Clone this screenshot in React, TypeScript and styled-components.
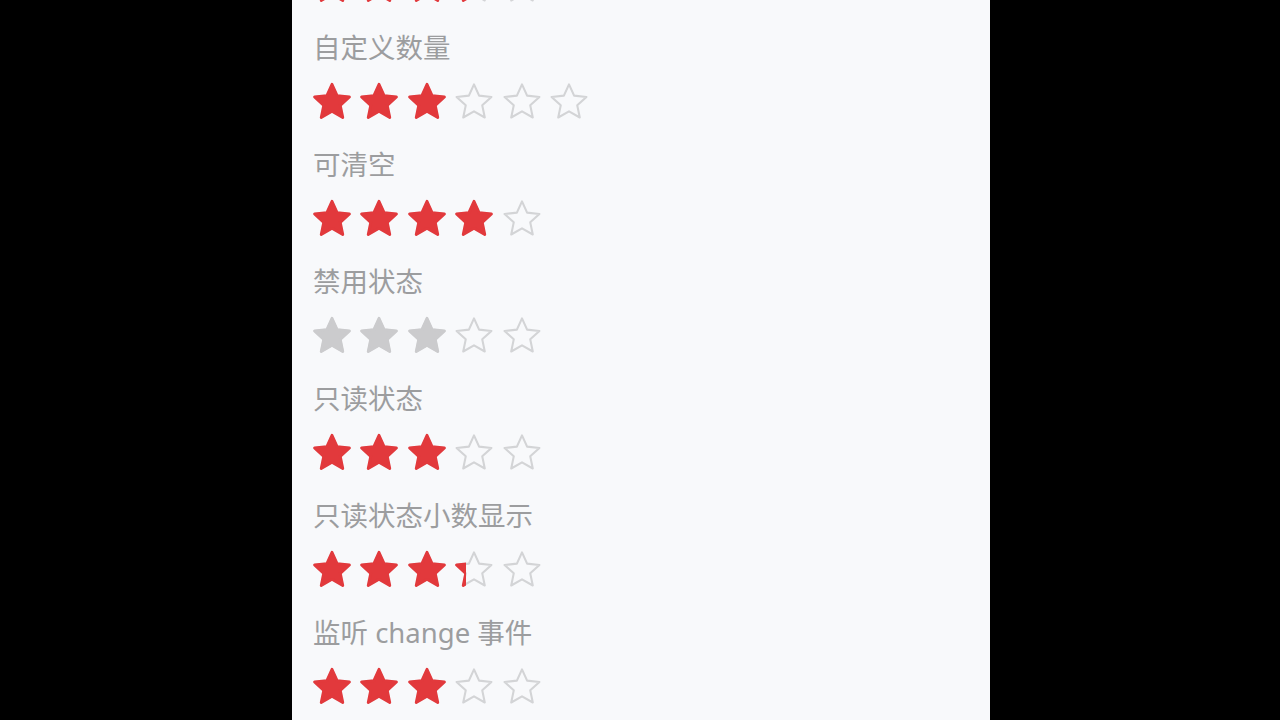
import React from 'react'
import styled, { createGlobalStyle } from 'styled-components';

const GlobalStyle = createGlobalStyle`
  html, body {
    margin: 0;
    padding: 0;
    background: #000;
  }
  body {
    font-family: "Noto Sans", "Noto Sans CJK SC", sans-serif;
  }
`

const Page = styled.div`
  display: flex;
  justify-content: center;
  height: 100vh;
  padding-left: 2px;
  box-sizing: border-box;
  background: #000;
`

const Phone = styled.div`
  width: 698px;
  height: 720px;
  overflow: hidden;
  background: #f8f9fb;
`

// the demo list is scrolled, so the first block is partly hidden
const List = styled.div`
  margin-top: -89px;
`

const Block = styled.section`
  padding: 0 21px 24px;
`

const Title = styled.h2`
  margin: 0;
  height: 40px;
  line-height: 40px;
  font-size: 27.5px;
  font-weight: 400;
  color: #9c9d9f;
  white-space: nowrap;
`

const Stars = styled.div`
  display: flex;
  gap: 7.4px;
  margin: 13px 0 0 -1px;
`

const StarBox = styled.div`
  position: relative;
  width: 40px;
  height: 40px;
`

const Fill = styled.div`
  position: absolute;
  top: 0;
  left: 0;
  height: 40px;
  overflow: hidden;
`

const STAR_POINTS =
  '12,2 15.06,8.79 22.46,9.6 16.95,14.61 18.47,21.9 12,18.2 5.53,21.9 7.05,14.61 1.54,9.6 8.94,8.79'

const StarShape: React.FC<{ color: string; solid?: boolean }> = ({ color, solid }) => (
  <svg width="40" height="40" viewBox="0 0 24 24" style={{ display: 'block' }}>
    <polygon
      points={STAR_POINTS}
      fill={solid ? color : 'none'}
      stroke={color}
      strokeWidth={solid ? 1.7 : 1.25}
      strokeLinejoin="round"
    />
  </svg>
)

interface RateProps {
  value: number
  count?: number
  disabled?: boolean
}

const Rate: React.FC<RateProps> = ({ value, count = 5, disabled }) => {
  const active = disabled ? '#cbcbcd' : '#e2393c'
  const items = Array.from({ length: count }, (_, i) => {
    const part = Math.max(0, Math.min(1, value - i))
    return (
      <StarBox key={i}>
        <StarShape color="#d3d4d6" />
        {part > 0 && (
          <Fill style={{ width: `${part * 100}%` }}>
            <StarShape color={active} solid />
          </Fill>
        )}
      </StarBox>
    )
  })
  return <Stars>{items}</Stars>
}

const demos: { title: string; value: number; count?: number; disabled?: boolean }[] = [
  { title: '半星', value: 3.5 },
  { title: '自定义数量', value: 3, count: 6 },
  { title: '可清空', value: 4 },
  { title: '禁用状态', value: 3, disabled: true },
  { title: '只读状态', value: 3 },
  { title: '只读状态小数显示', value: 3.3 },
  { title: '监听 change 事件', value: 3 },
]

const App: React.FC = () => {
  return (
    <>
      <GlobalStyle />
      <Page>
        <Phone>
          <List>
            {demos.map((d) => (
              <Block key={d.title}>
                <Title>{d.title}</Title>
                <Rate value={d.value} count={d.count} disabled={d.disabled} />
              </Block>
            ))}
          </List>
        </Phone>
      </Page>
    </>
  )
}

export default App
